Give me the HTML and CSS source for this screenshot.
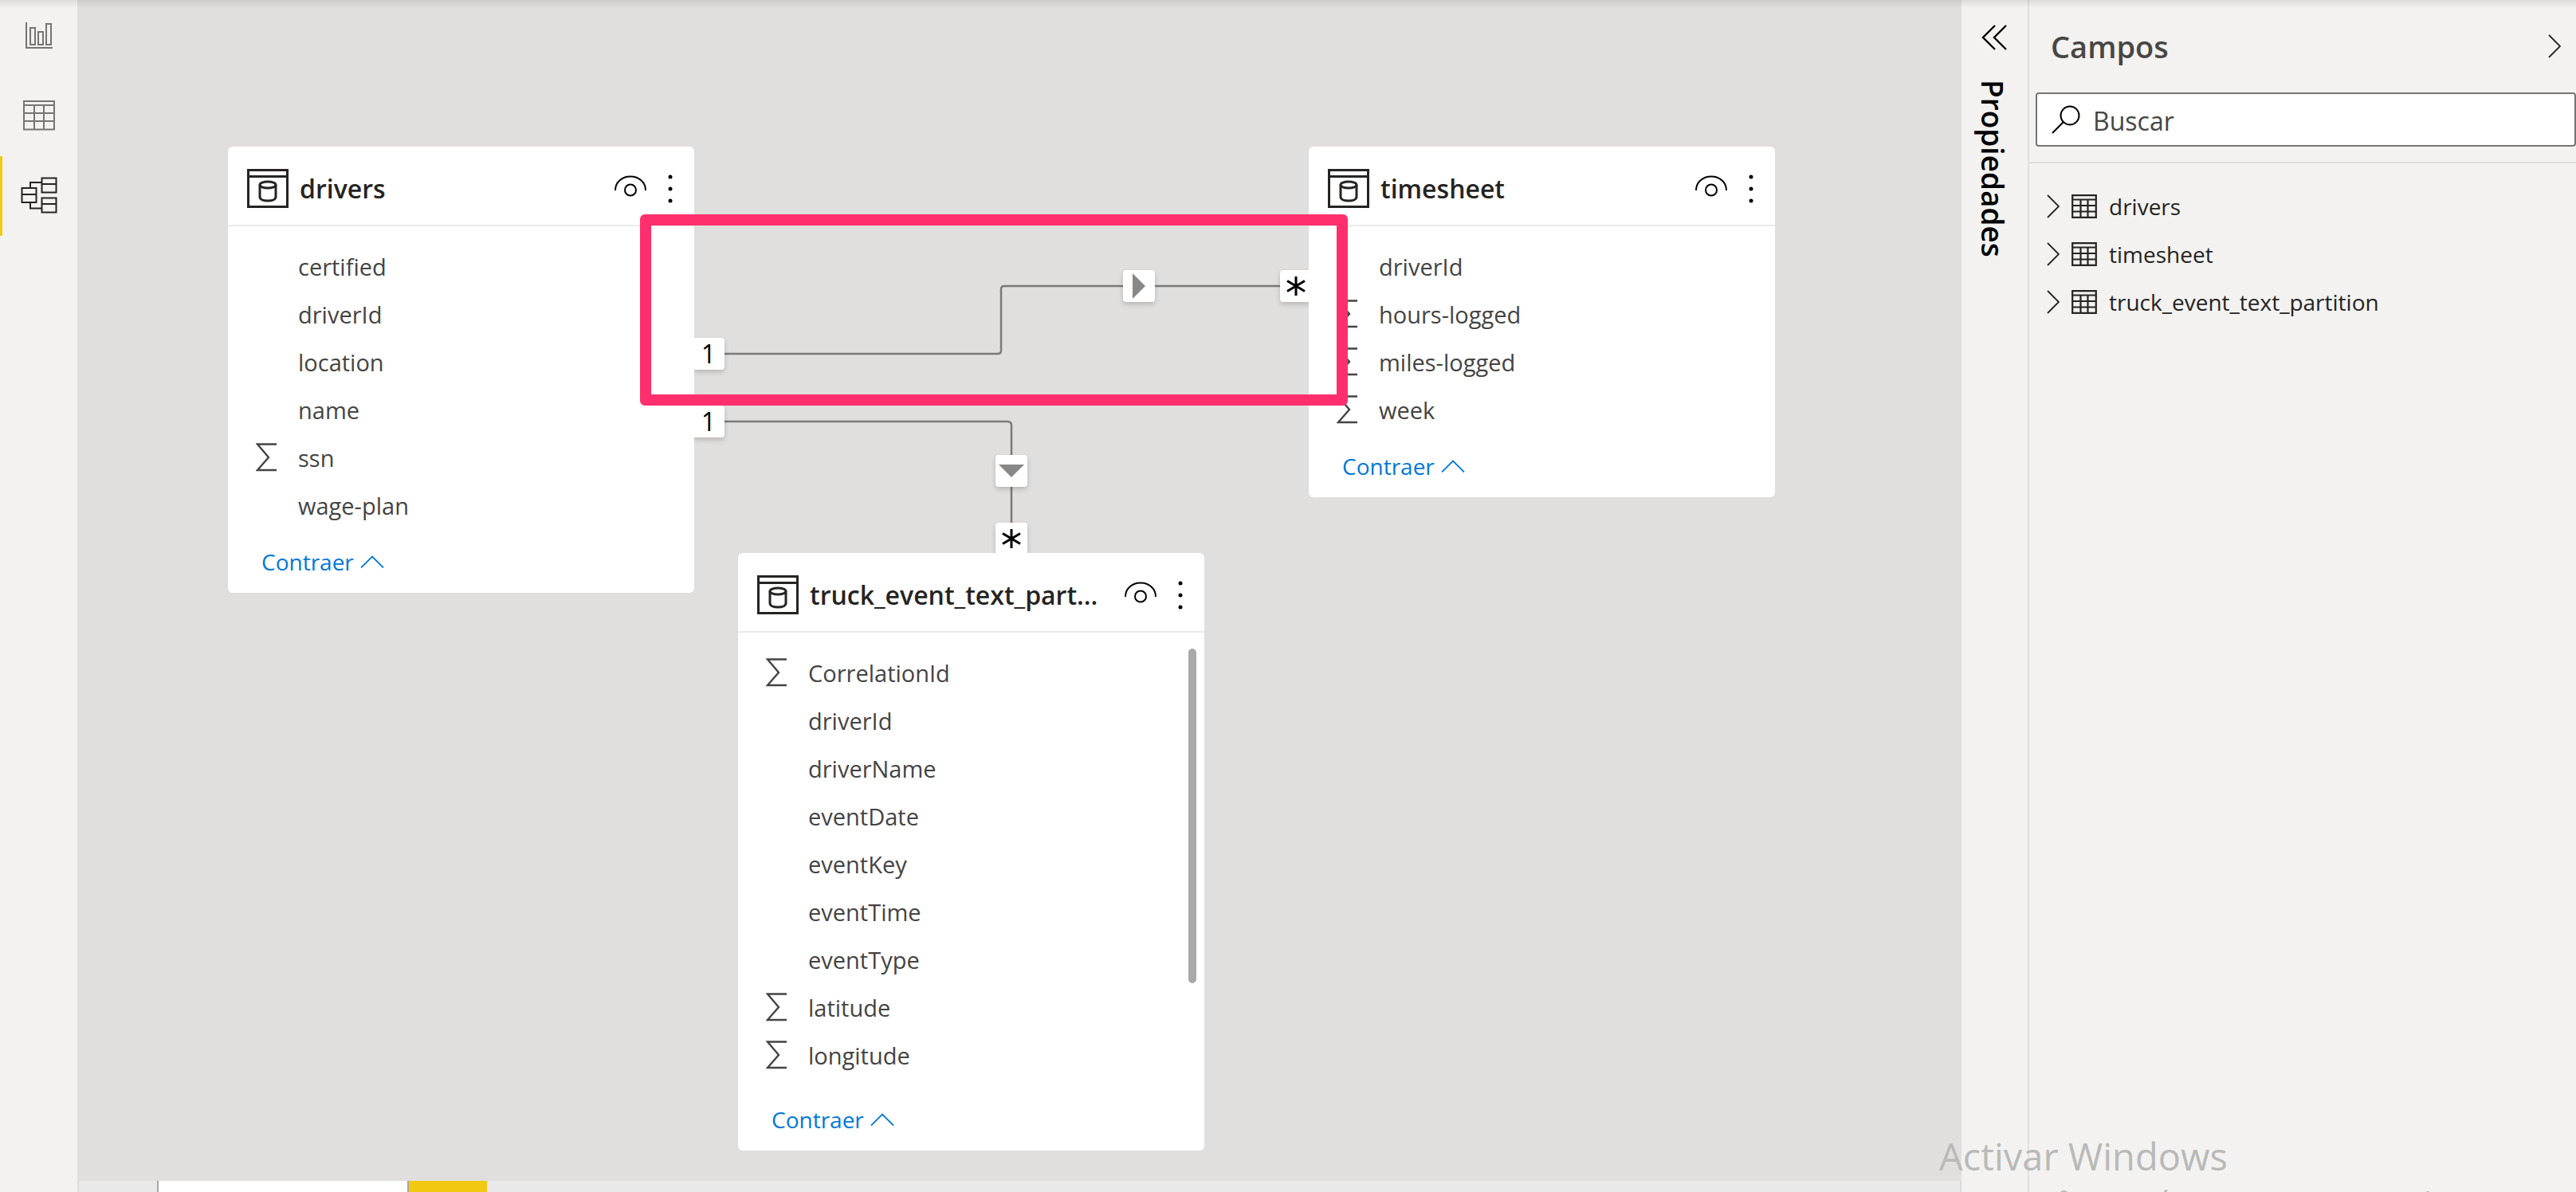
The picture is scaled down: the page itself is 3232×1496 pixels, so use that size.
FILE: index.html
```
<!DOCTYPE html>
<html lang="es">
<head>
<meta charset="utf-8">
<meta name="viewport" content="width=device-width, initial-scale=1">
<title>Vista de modelo</title>
<link rel="stylesheet" href="styles.css">
</head>
<body>
<svg class="sprite" aria-hidden="true">
  <symbol id="i-db" viewBox="0 0 52 49">
    <g fill="none" stroke="currentColor" stroke-width="3">
      <path d="M1.5 1.5h49v46h-49zM1.5 9.5h49"/>
      <ellipse cx="26" cy="20" rx="10" ry="4"/>
      <path d="M16 20v15c0 3 4 5 10 5s10-2 10-5V20"/>
    </g>
  </symbol>
  <symbol id="i-eye" viewBox="0 0 40 27">
    <g fill="none" stroke="currentColor" stroke-width="2">
      <path d="M1 19C1 9 9 1.500 20 1.500S39 9 39 19"/>
      <circle cx="20" cy="18.500" r="7"/>
    </g>
  </symbol>
  <symbol id="i-dots" viewBox="0 0 6 36">
    <circle cx="3" cy="3" r="2.500"/><circle cx="3" cy="18" r="2.500"/><circle cx="3" cy="33" r="2.500"/>
  </symbol>
  <symbol id="i-sum" viewBox="0 0 26 36">
    <path d="M26 1.500H2L16 18 2 34h24" fill="none" stroke="currentColor" stroke-width="2.400"/>
  </symbol>
  <symbol id="i-up" viewBox="0 0 30 16">
    <path d="M1 15.500 15 1.500l14 14" fill="none" stroke="currentColor" stroke-width="1.800"/>
  </symbol>
  <symbol id="i-right" viewBox="0 0 16 30">
    <path d="M1 1l14 14L1 29" fill="none" stroke="currentColor" stroke-width="1.800"/>
  </symbol>
  <symbol id="i-grid" viewBox="0 0 32 30">
    <path d="M1.200 1.200h29.600v27.600H1.200zM1.200 6.500h29.600M1.200 14h29.600M1.200 21.500h29.600M11.500 6v23M20.500 6v23" fill="none" stroke="currentColor" stroke-width="2.200"/>
  </symbol>
  <symbol id="i-star" viewBox="0 0 26 26">
    <path d="M13 1v24M2 6.500l22 13M24 6.500l-22 13" fill="none" stroke="currentColor" stroke-width="3"/>
  </symbol>
</svg>

<div class="app">
  <nav class="rail" aria-label="Vistas">
    <button class="view" type="button" aria-label="Informe">
      <svg width="36" height="34" viewBox="0 0 36 34" fill="none" stroke="currentColor" stroke-width="2"><path d="M2 0v32h33M7 7h6v21H7zM17 12h6v16h-6zM27 2h6v26h-6z"/></svg>
    </button>
    <button class="view" type="button" aria-label="Datos">
      <svg width="40" height="38" viewBox="0 0 40 38" fill="none" stroke="currentColor" stroke-width="2"><path d="M1 1h38v35.500H1zM1 6h38M1 16h38M1 26h38M14 6v31M26 6v31"/></svg>
    </button>
    <button class="view view-active" type="button" aria-label="Modelo" aria-current="page">
      <svg width="46" height="46" viewBox="0 0 46 46" fill="none" stroke="currentColor" stroke-width="2"><path d="M1.500 14h18v18h-18zM1.500 22h18M26.500 1.500h18v18h-18zM26.500 9h18M26.500 26.500h18v18h-18zM26.500 34h18M12 14V7h14.500M12 32v7.500h14.500"/></svg>
    </button>
  </nav>

  <main class="workspace">
    <div class="canvas">
      <svg class="links" aria-hidden="true">
        <path d="M812 444h343q4 0 4-4v-77q0-4 4-4h380M812 529h355q5 0 5 5v126"/>
      </svg>
      <span class="badge one-a">1</span>
      <span class="badge one-b">1</span>
      <span class="badge dir-a"><svg width="16" height="32" viewBox="0 0 16 32"><path d="M0 0l16 16L0 32z"/></svg></span>
      <span class="badge dir-b"><svg width="32" height="16" viewBox="0 0 32 16"><path d="M0 0h32L16 16z"/></svg></span>
      <span class="badge many-a"><svg width="26" height="26"><use href="#i-star"/></svg></span>
      <span class="badge many-b"><svg width="26" height="26"><use href="#i-star"/></svg></span>

      <section class="card card-drivers">
        <header class="card-head">
          <svg class="db" width="52" height="49"><use href="#i-db"/></svg>
          <h2>drivers</h2>
          <button type="button" class="eye" aria-label="Ocultar"><svg width="40" height="27"><use href="#i-eye"/></svg></button>
          <button type="button" class="more" aria-label="Más opciones"><svg width="6" height="36"><use href="#i-dots"/></svg></button>
        </header>
        <ul class="cols">
          <li>certified</li>
          <li>driverId</li>
          <li>location</li>
          <li>name</li>
          <li><svg class="sum" width="26" height="36"><use href="#i-sum"/></svg>ssn</li>
          <li>wage-plan</li>
        </ul>
        <button type="button" class="collapse">Contraer <svg width="30" height="16"><use href="#i-up"/></svg></button>
      </section>

      <section class="card card-timesheet">
        <header class="card-head">
          <svg class="db" width="52" height="49"><use href="#i-db"/></svg>
          <h2>timesheet</h2>
          <button type="button" class="eye" aria-label="Ocultar"><svg width="40" height="27"><use href="#i-eye"/></svg></button>
          <button type="button" class="more" aria-label="Más opciones"><svg width="6" height="36"><use href="#i-dots"/></svg></button>
        </header>
        <ul class="cols">
          <li>driverId</li>
          <li><svg class="sum" width="26" height="36"><use href="#i-sum"/></svg>hours-logged</li>
          <li><svg class="sum" width="26" height="36"><use href="#i-sum"/></svg>miles-logged</li>
          <li><svg class="sum" width="26" height="36"><use href="#i-sum"/></svg>week</li>
        </ul>
        <button type="button" class="collapse">Contraer <svg width="30" height="16"><use href="#i-up"/></svg></button>
      </section>

      <section class="card card-truck">
        <header class="card-head">
          <svg class="db" width="52" height="49"><use href="#i-db"/></svg>
          <h2>truck_event_text_part...</h2>
          <button type="button" class="eye" aria-label="Ocultar"><svg width="40" height="27"><use href="#i-eye"/></svg></button>
          <button type="button" class="more" aria-label="Más opciones"><svg width="6" height="36"><use href="#i-dots"/></svg></button>
        </header>
        <ul class="cols cols-scroll">
          <li><svg class="sum" width="26" height="36"><use href="#i-sum"/></svg>CorrelationId</li>
          <li>driverId</li>
          <li>driverName</li>
          <li>eventDate</li>
          <li>eventKey</li>
          <li>eventTime</li>
          <li>eventType</li>
          <li><svg class="sum" width="26" height="36"><use href="#i-sum"/></svg>latitude</li>
          <li><svg class="sum" width="26" height="36"><use href="#i-sum"/></svg>longitude</li>
        </ul>
        <button type="button" class="collapse">Contraer <svg width="30" height="16"><use href="#i-up"/></svg></button>
      </section>

      <div class="highlight"></div>
    </div>
    <div class="tabs">
      <div class="tab"></div>
      <div class="tab-add"></div>
    </div>
  </main>

  <aside class="props">
    <button type="button" class="expand" aria-label="Expandir">
      <svg width="32" height="32" viewBox="0 0 32 32" fill="none" stroke="currentColor" stroke-width="2.400"><path d="M17 1 2 16l15 15M31 1 16 16l15 15"/></svg>
    </button>
    <h2>Propiedades</h2>
  </aside>

  <aside class="fields">
    <header class="fields-head">
      <h2>Campos</h2>
      <button type="button" aria-label="Contraer panel"><svg width="16" height="30"><use href="#i-right"/></svg></button>
    </header>
    <label class="search">
      <svg width="36" height="36" viewBox="0 0 36 36" fill="none" stroke="currentColor" stroke-width="2"><circle cx="23" cy="13" r="11.500"/><path d="M15 21 1 35"/></svg>
      <input type="text" placeholder="Buscar" aria-label="Buscar">
    </label>
    <ul class="tree">
      <li><a href="#drivers"><svg width="16" height="30"><use href="#i-right"/></svg><svg width="32" height="30"><use href="#i-grid"/></svg>drivers</a></li>
      <li><a href="#timesheet"><svg width="16" height="30"><use href="#i-right"/></svg><svg width="32" height="30"><use href="#i-grid"/></svg>timesheet</a></li>
      <li><a href="#truck"><svg width="16" height="30"><use href="#i-right"/></svg><svg width="32" height="30"><use href="#i-grid"/></svg>truck_event_text_partition</a></li>
    </ul>
    <div class="watermark">
      <p class="wm-title">Activar Windows</p>
      <p class="wm-text">Ve a Configuración para activar Windows.</p>
    </div>
  </aside>
</div>
</body>
</html>
```
FILE: styles.css
```
* { box-sizing: border-box; }

body {
  margin: 0;
  font-family: "Open Sans", "Noto Sans", sans-serif;
  font-size: 29px;
  color: #252423;
  background: #f3f2f1;
}

h2, p, ul { margin: 0; padding: 0; }
ul { list-style: none; }
svg { display: block; flex: none; }

button {
  margin: 0;
  padding: 0;
  border: 0;
  background: none;
  color: inherit;
  font: inherit;
  cursor: pointer;
}

.sprite { position: absolute; width: 0; height: 0; }

.app {
  position: relative;
  display: flex;
  height: 100vh;
  overflow: hidden;
}

/* shadow cast by the ribbon above the workspace */
.app::before {
  content: "";
  position: absolute;
  inset: 0 0 auto;
  height: 10px;
  background: linear-gradient(rgba(0, 0, 0, .09), rgba(0, 0, 0, 0));
  z-index: 5;
  pointer-events: none;
}

/* view switcher */
.rail {
  display: flex;
  flex-direction: column;
  flex: none;
  width: 97px;
  margin-top: -4px;
}

.view {
  display: flex;
  align-items: center;
  justify-content: center;
  height: 100px;
  padding-bottom: 3px;
  border-left: 3px solid transparent;
  border-right: 3px solid transparent;
  color: #777574;
}

.view-active {
  border-left-color: #f2c811;
  color: #252423;
}

/* model canvas */
.workspace {
  display: flex;
  flex-direction: column;
  flex: 1;
  min-width: 0;
}

.canvas {
  position: relative;
  flex: 1;
  background: #e0dfdd;
}

.links {
  position: absolute;
  inset: 0;
  width: 100%;
  height: 100%;
  fill: none;
  stroke: #7b7a79;
  stroke-width: 2.5px;
}

.badge {
  position: absolute;
  display: flex;
  align-items: center;
  justify-content: center;
  width: 40px;
  height: 40px;
  border-radius: 4px;
  background: #fff;
  box-shadow: 0 3px 6px rgba(0, 0, 0, .18);
  color: #000;
  font-size: 32px;
  font-weight: 500;
  line-height: 42px;
}

.dir-a, .dir-b { fill: #8a8886; }
.one-a { left: 772px; top: 424px; }
.one-b { left: 772px; top: 509px; }
.dir-a { left: 1312px; top: 339px; }
.many-a { left: 1509px; top: 339px; }
.dir-b { left: 1152px; top: 571px; }
.many-b { left: 1152px; top: 656px; }

.card {
  position: absolute;
  width: 585px;
  border-radius: 6px;
  background: #fff;
}

.card-drivers { left: 189px; top: 184px; }
.card-timesheet { left: 1545px; top: 184px; }
.card-truck { left: 829px; top: 694px; }

.card-head {
  display: flex;
  align-items: center;
  height: 100px;
  padding: 7px 10px 0 24px;
  border-bottom: 2px solid #eaeaea;
}

.card-head h2 {
  flex: 1;
  min-width: 0;
  margin: 0 18px 0 14px;
  white-space: nowrap;
  font-size: 32px;
  font-weight: 600;
  line-height: 48px;
}

.eye, .more {
  display: flex;
  align-items: center;
  justify-content: center;
  height: 48px;
  color: #000;
}

.eye { width: 54px; padding-bottom: 6px; }
.more { width: 40px; margin-left: 3px; }

.cols { padding-top: 21px; color: #444; }
.cols-scroll { position: relative; padding-bottom: 10px; }

.cols-scroll::after {
  content: "";
  position: absolute;
  top: 20px;
  right: 10px;
  width: 10px;
  height: 420px;
  border-radius: 5px;
  background: #a9a9a9;
}

.cols li {
  position: relative;
  height: 60px;
  padding-left: 88px;
  line-height: 60px;
}

.sum { position: absolute; left: 35px; top: 11px; }

.collapse {
  display: flex;
  align-items: center;
  gap: 8px;
  height: 79px;
  padding-left: 42px;
  color: #0078d7;
  font-size: 28px;
}

/* frame drawn round the drivers - timesheet relationship */
.highlight {
  position: absolute;
  left: 706px;
  top: 269px;
  width: 888px;
  height: 240px;
  border: 14px solid #ff2f6d;
  border-radius: 6px;
}

/* page tabs, mostly below the fold */
.tabs {
  display: flex;
  height: 14px;
  padding-left: 98px;
  border-left: 2px solid #dcdbda;
  border-right: 2px solid #dcdbda;
  background: #e9e9e9;
}

.tab {
  width: 316px;
  border: solid #a6a6a6;
  border-width: 0 2px;
  background: #fff;
}

.tab-add { width: 98px; background: #f2c811; }

/* collapsed properties pane */
.props {
  display: flex;
  flex-direction: column;
  align-items: center;
  flex: none;
  width: 85px;
  padding: 31px 2px 0 0;
  border-right: 2px solid #e0dfdd;
  color: #000;
}

.props h2 {
  margin-top: 37px;
  padding-right: 3px;
  writing-mode: vertical-rl;
  font-size: 37px;
  font-weight: 600;
  line-height: 48px;
}

/* fields pane */
.fields {
  position: relative;
  flex: none;
  width: 686px;
}

.fields-head {
  display: flex;
  align-items: center;
  justify-content: space-between;
  height: 116px;
  padding: 0 19px 0 27px;
}

.fields-head h2 {
  color: #484644;
  font-size: 38px;
  font-weight: 600;
}

.search {
  display: flex;
  align-items: center;
  gap: 16px;
  height: 68px;
  margin-left: 8px;
  padding-left: 18px;
  border: 2px solid #777574;
  border-radius: 4px;
  background: #fff;
  color: #000;
}

.search input {
  flex: 1;
  min-width: 0;
  height: 60px;
  padding: 2px 0 0;
  border: 0;
  outline: 0;
  background: none;
  color: #484644;
  font: inherit;
  font-size: 32px;
}

.search input::placeholder { color: #484644; opacity: 1; }

.tree {
  margin-top: 19px;
  padding-top: 24px;
  border-top: 2px solid #e0dfdd;
}

.tree a {
  display: flex;
  align-items: center;
  height: 60px;
  padding-left: 22px;
  color: #252423;
  font-size: 28px;
  text-decoration: none;
}

.tree a svg { margin-right: 15px; }

/* activation notice laid over the window by the system */
.watermark {
  position: absolute;
  left: -113px;
  bottom: -38px;
  color: #b9b9b8;
  white-space: nowrap;
}

.wm-title { font-size: 47px; line-height: 66px; }
.wm-text { font-size: 36px; line-height: 50px; }
```
